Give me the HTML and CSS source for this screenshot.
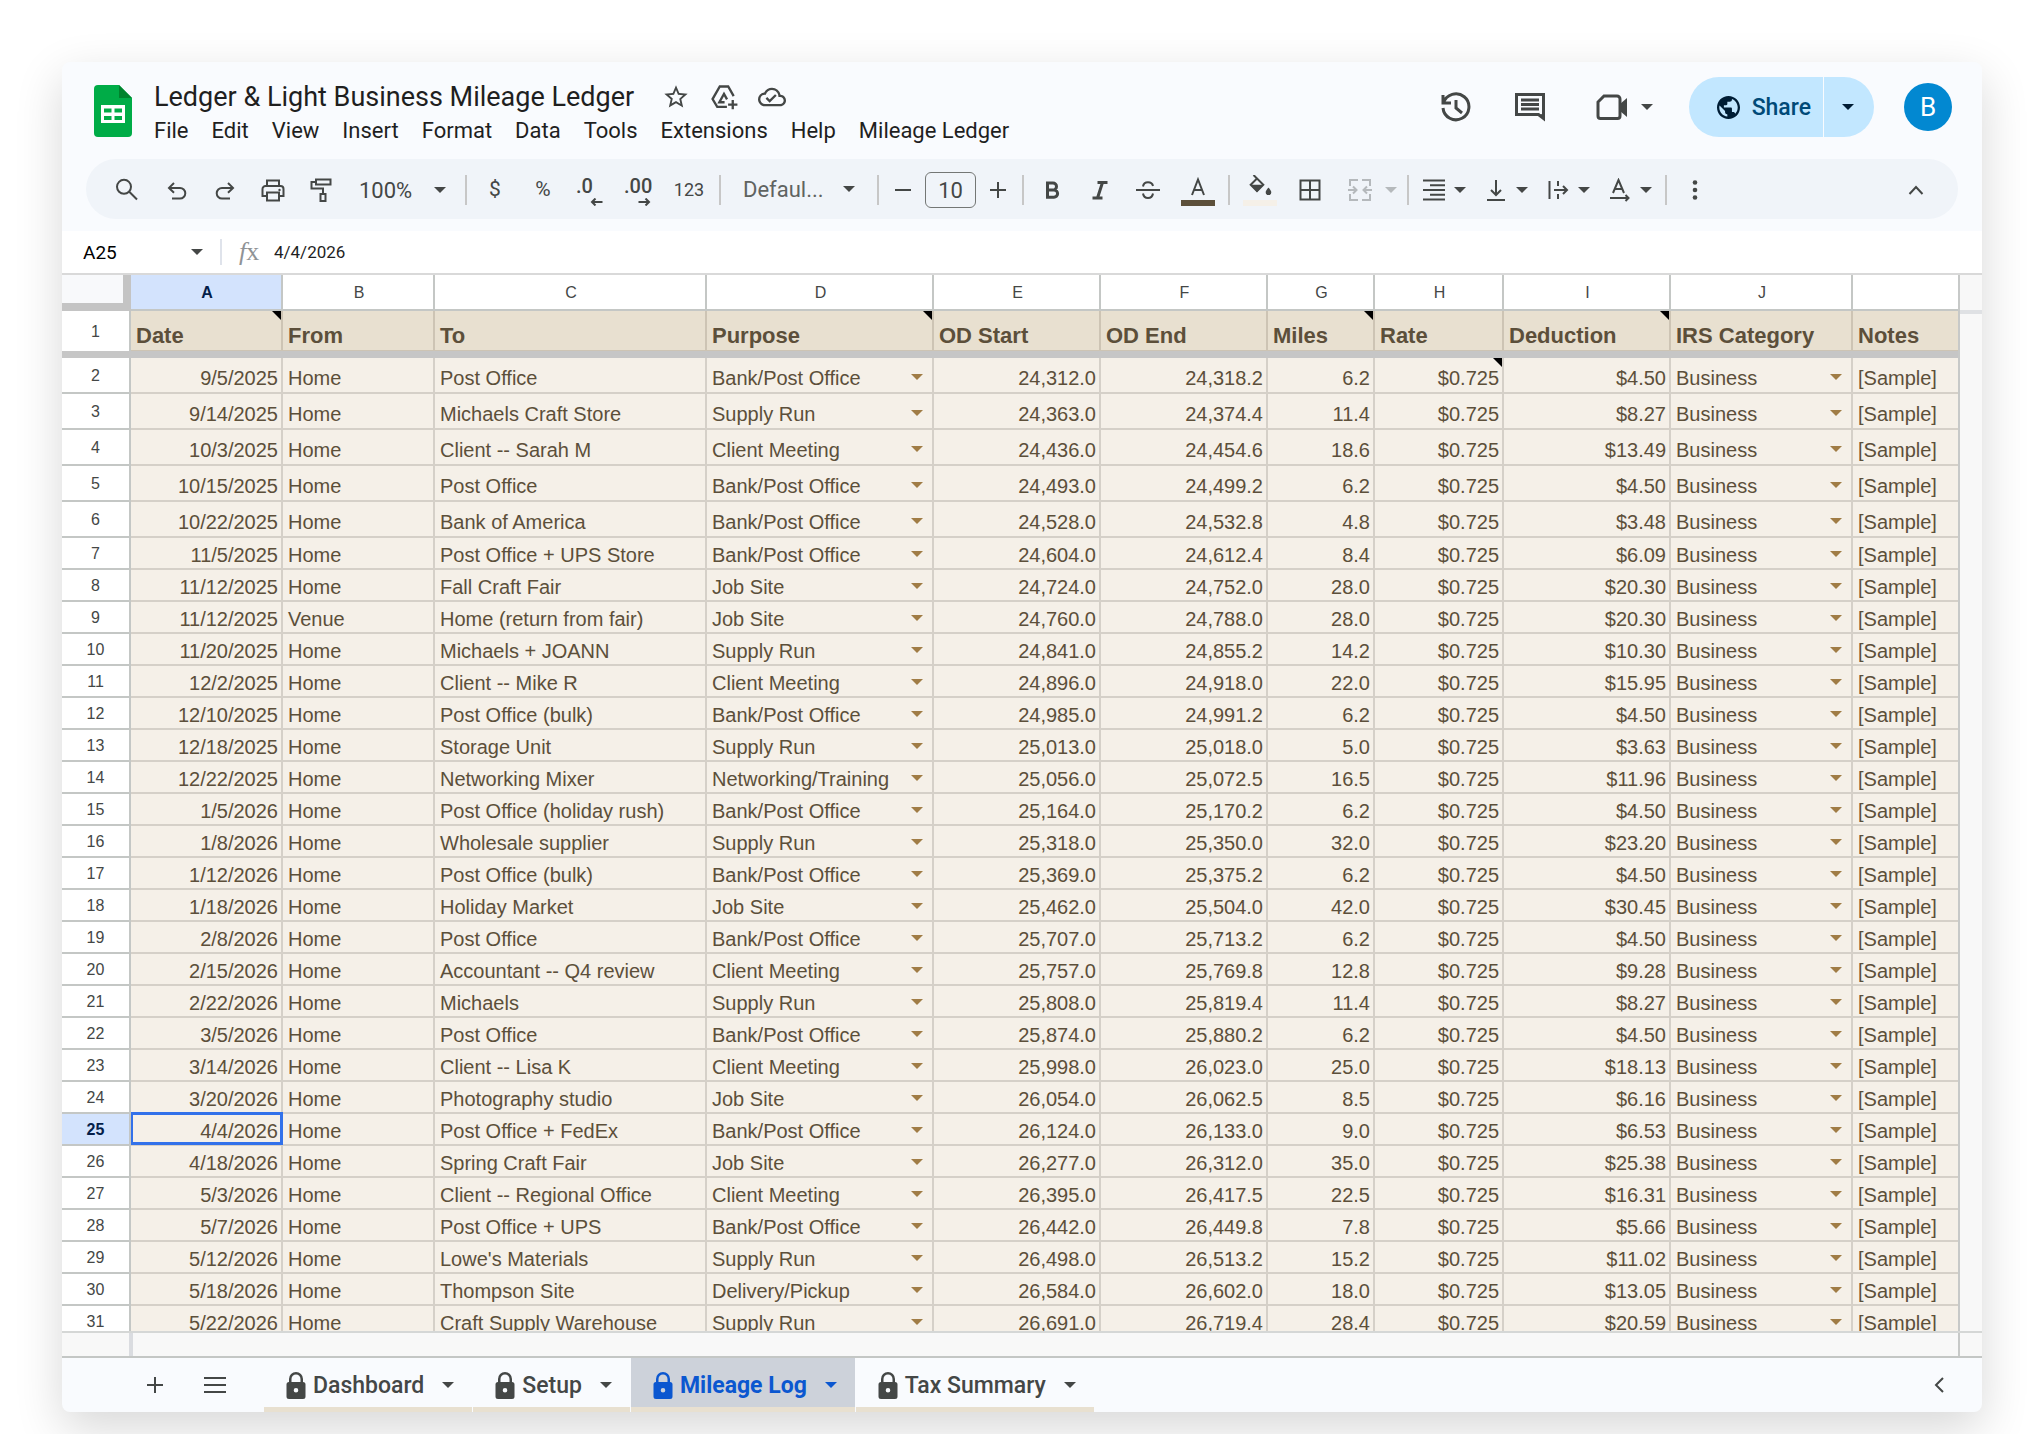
FILE: index.html
```html
<!DOCTYPE html>
<html lang="en">
<head>
  <meta charset="UTF-8" />
  <meta name="viewport" content="width=device-width, initial-scale=1" />
  <title>Ledger &amp; Light Business Mileage Ledger</title>
  <link rel="stylesheet" href="styles.css">
</head>
<body>
  <main class="window">
    <header class="topbar">
      <svg class="logo" viewBox="0 0 38 52" aria-hidden="true">
        <path d="M4 0h21l13 13v35a4 4 0 0 1-4 4H4a4 4 0 0 1-4-4V4a4 4 0 0 1 4-4z" fill="#00ac47"/>
        <path d="M25 0l13 13H25z" fill="#00832d"/>
        <path fill-rule="evenodd" d="M7 20h24v18H7zM10 23.500v4h7.500v-4zM20.500 23.500v4H28v-4zM10 31v4h7.500v-4zM20.500 31v4H28v-4z" fill="#fff"/>
      </svg>
      <div class="doc">
        <div class="title-row">
          <h1>Ledger &amp; Light Business Mileage Ledger</h1>
          <button class="title-btn" aria-label="Star"><svg viewBox="0 0 24 24"><path d="M22 9.24l-7.19-.62L12 2 9.19 8.63 2 9.24l5.46 4.73L5.82 21 12 17.27 18.18 21l-1.63-7.03L22 9.24zM12 15.4l-3.76 2.27 1-4.28-3.32-2.88 4.38-.38L12 6.1l1.71 4.04 4.38.38-3.32 2.88 1 4.28L12 15.4z"/></svg></button>
          <button class="title-btn" aria-label="Move"><svg viewBox="0 0 24 24"><path class="line" d="M14.500 20.500H6.200L2.200 13.800 8.400 3h7.200l4.700 8.200M12.500 16.500H8L12 9.400l2.600 4.600M19.500 14.500v8M15.500 18.500h8"/></svg></button>
          <button class="title-btn" aria-label="Saved to Drive"><svg viewBox="0 0 24 24"><path d="M19.350 10.040A7.490 7.490 0 0 0 12 4C9.110 4 6.600 5.640 5.350 8.040A5.990 5.990 0 0 0 0 14c0 3.310 2.690 6 6 6h13c2.760 0 5-2.240 5-5 0-2.640-2.050-4.780-4.650-4.960zM19 18H6c-2.210 0-4-1.790-4-4s1.790-4 4-4h.71C7.370 7.690 9.480 6 12 6c3.040 0 5.500 2.460 5.500 5.500v.5H19c1.660 0 3 1.340 3 3s-1.340 3-3 3zm-9-3.820l-2.090-2.090L6.500 13.500 10 17l6.010-6.010-1.410-1.410z"/></svg></button>
        </div>
        <nav class="menus">
          <button>File</button>
          <button>Edit</button>
          <button>View</button>
          <button>Insert</button>
          <button>Format</button>
          <button>Data</button>
          <button>Tools</button>
          <button>Extensions</button>
          <button>Help</button>
          <button>Mileage Ledger</button>
        </nav>
      </div>
      <div class="actions">
        <button class="action" aria-label="Version history"><svg viewBox="0 0 32 32"><path class="line thick" d="M3 4v8h8M3.500 12A13 13 0 1 1 3 17M16 9v8l6 5"/></svg></button>
        <button class="action" aria-label="Comments"><svg viewBox="0 0 32 32"><path class="line thick" d="M2.500 3.500h27v24l-5-4h-22z"/><path d="M25 24l6 6v-8z"/><path class="line thick" d="M7 9h18M7 13.500h18M7 18h18"/></svg></button>
        <button class="action meet" aria-label="Meet"><svg viewBox="0 0 32 32"><path class="line thick" d="M8 5h13a3 3 0 0 1 3 3v17a2.500 2.500 0 0 1-2.500 2.500H4.500A2.500 2.500 0 0 1 2 25V11z"/><path d="M24 13l7-6v19l-7-6z"/></svg><svg class="caret" viewBox="0 0 12 6"><path d="M0 0h12L6 6z"/></svg></button>
        <div class="share">
          <button class="share-main"><svg viewBox="2 2 20 20"><path d="M12 2C6.480 2 2 6.480 2 12s4.480 10 10 10 10-4.480 10-10S17.520 2 12 2zm-1 17.930c-3.950-.49-7-3.850-7-7.930 0-.62.08-1.210.21-1.790L9 15v1c0 1.100.9 2 2 2v1.930zm6.900-2.540c-.26-.81-1-1.390-1.900-1.390h-1v-3c0-.55-.45-1-1-1H8v-2h2c.55 0 1-.45 1-1V7h2c1.100 0 2-.9 2-2v-.41c2.930 1.190 5 4.060 5 7.410 0 2.080-.8 3.970-2.100 5.390z"/></svg>Share</button>
          <button class="share-more" aria-label="Share options"><svg class="caret" viewBox="0 0 12 6"><path d="M0 0h12L6 6z"/></svg></button>
        </div>
        <button class="avatar">B</button>
      </div>
    </header>

    <div class="toolbar" role="toolbar">
      <button class="wide" aria-label="Search menus"><svg viewBox="0 0 24 24"><path class="line" d="M14 13.500l8 8M9 1.800a7 7 0 1 1 0 14 7 7 0 0 1 0-14z"/></svg></button>
      <button aria-label="Undo"><svg viewBox="0 0 24 24"><path class="line" d="M7 20.500h8a5.300 5.300 0 0 0 0-10.600H4.500M9 5l-5 4.900 5 4.900"/></svg></button>
      <button aria-label="Redo"><svg viewBox="0 0 24 24"><path class="line" d="M17 20.500H9A5.300 5.300 0 0 1 9 9.900h10.500M15 5l5 4.900-5 4.900"/></svg></button>
      <button aria-label="Print"><svg viewBox="0 0 24 24"><path class="line" d="M6 8V2.500h12V8M6 18H1.500v-7a3 3 0 0 1 3-3h15a3 3 0 0 1 3 3v7H18M6 14.500h12v8H6z"/><circle cx="18.500" cy="12" r="1.200"/></svg></button>
      <button aria-label="Paint format"><svg viewBox="0 0 24 24"><path class="line" d="M7 1.500h14.500v5H7zM7 4H2.500v6.500h11.500V16M11.500 16h5v7h-5z"/></svg></button>
      <button class="zoom">100%<svg class="caret" viewBox="0 0 12 6"><path d="M0 0h12L6 6z"/></svg></button>
      <span class="sep"></span>
      <button class="sym">$</button>
      <button class="sym">%</button>
      <button class="decimal" aria-label="Decrease decimal places">.0<svg class="step" viewBox="0 0 12 8"><path class="line" d="M12 4H2M5 .5L1.500 4 5 7.500"/></svg></button>
      <button class="decimal" aria-label="Increase decimal places">.00<svg class="step" viewBox="0 0 12 8"><path class="line" d="M0 4h10M7 .5L10.500 4 7 7.500"/></svg></button>
      <button class="wide num">123</button>
      <span class="sep"></span>
      <button class="font">Defaul...<svg class="caret" viewBox="0 0 12 6"><path d="M0 0h12L6 6z"/></svg></button>
      <span class="sep"></span>
      <button class="size-btn" aria-label="Decrease font size"><svg viewBox="0 0 24 24"><path class="line" d="M4 12h16"/></svg></button>
      <input class="size" type="text" value="10" aria-label="Font size">
      <button class="size-btn" aria-label="Increase font size"><svg viewBox="0 0 24 24"><path class="line" d="M4 12h16M12 4v16"/></svg></button>
      <span class="sep"></span>
      <button aria-label="Bold"><svg viewBox="0 0 24 24"><path class="line heavy" d="M7.500 5h5.500a3.500 3.500 0 0 1 0 7H7.500zM7.500 12h6.500a3.600 3.600 0 0 1 0 7.200H7.500z"/></svg></button>
      <button aria-label="Italic"><svg viewBox="0 0 24 24"><path class="line heavy" d="M9.500 4.500h10M4.500 20h10M14.500 4.500L9.500 20"/></svg></button>
      <button aria-label="Strikethrough"><svg viewBox="0 0 24 24"><path class="line" d="M0 12h24M7 8.500c.5-3 2.500-4.200 5-4.200s4.500 1.200 5 3.700M7 15.500c.5 3 2.500 4.500 5 4.500s4.500-1.500 5-4.500"/></svg></button>
      <button class="wide color" aria-label="Text color"><svg viewBox="0 0 24 24"><path class="line" d="M6 20L12 4.500 18 20M8 15h8"/></svg><span class="swatch ink"></span></button>
      <span class="sep"></span>
      <button class="wide color" aria-label="Fill color"><svg viewBox="0 0 24 24"><path class="line" d="M5.500 0l9.800 9.700-6.300 6.300-6.300-6.300L9 3.500"/><path d="M2.500 9.700h13L9 17zM20.500 12.500s2.800 3 2.800 4.800a2.800 2.800 0 0 1-5.600 0c0-1.800 2.800-4.800 2.800-4.800z"/></svg><span class="swatch fill"></span></button>
      <button aria-label="Borders"><svg viewBox="0 0 24 24"><path class="line" d="M2.500 2.500h19v19h-19zM12 2.500v19M2.500 12h19"/></svg></button>
      <button class="merge" aria-label="Merge cells" disabled><svg viewBox="0 0 24 24"><path class="line" d="M10 2H2v6M14 2h8v6M10 22H2v-6M14 22h8v-6M0 12h8M5 8.500L8.500 12 5 15.500M24 12h-8M19 8.500L15.500 12l3.500 3.500"/></svg><svg class="caret" viewBox="0 0 12 6"><path d="M0 0h12L6 6z"/></svg></button>
      <span class="sep"></span>
      <button class="menu" aria-label="Horizontal align"><svg viewBox="0 0 24 24"><path class="line" d="M1 2.500h22M8 7.200h15M1 12h22M8 16.800h15M1 21.500h22"/></svg><svg class="caret" viewBox="0 0 12 6"><path d="M0 0h12L6 6z"/></svg></button>
      <button class="menu" aria-label="Vertical align"><svg viewBox="0 0 24 24"><path class="line" d="M3 22h18M12 2v15M7 12l5 5 5-5"/></svg><svg class="caret" viewBox="0 0 12 6"><path d="M0 0h12L6 6z"/></svg></button>
      <button class="menu" aria-label="Text wrapping"><svg viewBox="0 0 24 24"><path class="line" d="M3.500 3v18M12 3v5M12 16v5M8 12h13M17 8l4 4-4 4"/></svg><svg class="caret" viewBox="0 0 12 6"><path d="M0 0h12L6 6z"/></svg></button>
      <button class="menu" aria-label="Text rotation"><svg viewBox="0 0 24 24"><path class="line" d="M5 15L10.500 2 16 15M7 11h7M2 20h18M17.500 17l3 3-3 3"/></svg><svg class="caret" viewBox="0 0 12 6"><path d="M0 0h12L6 6z"/></svg></button>
      <span class="sep"></span>
      <button aria-label="More"><svg viewBox="0 0 24 24"><circle cx="12" cy="4.500" r="2.300"/><circle cx="12" cy="12" r="2.300"/><circle cx="12" cy="19.500" r="2.300"/></svg></button>
      <button class="collapse" aria-label="Hide the menus"><svg viewBox="0 0 24 24"><path class="line" d="M5.500 16l6.500-7 6.500 7"/></svg></button>
    </div>

    <div class="formula-bar">
      <input class="name-box" type="text" value="A25" aria-label="Name box">
      <svg class="caret" viewBox="0 0 12 6"><path d="M0 0h12L6 6z"/></svg>
      <span class="bar-line"></span>
      <span class="fx"><i>f</i>x</span>
      <input class="formula" type="text" value="4/4/2026" aria-label="Formula">
    </div>

    <section class="grid">
      <div class="cells">
        <table>
          <colgroup>
            <col class="c-head"><col class="c-a"><col class="c-b"><col class="c-c"><col class="c-d"><col class="c-e"><col class="c-f"><col class="c-g"><col class="c-h"><col class="c-i"><col class="c-j"><col>
          </colgroup>
          <thead>
            <tr class="letters">
              <td class="corner"></td>
              <th class="active">A</th><th>B</th><th>C</th><th>D</th><th>E</th><th>F</th><th>G</th><th>H</th><th>I</th><th>J</th><th></th>
            </tr>
            <tr class="labels">
              <th class="row-no">1</th>
              <td class="note">Date</td><td>From</td><td>To</td><td class="note">Purpose</td><td>OD Start</td><td>OD End</td><td class="note">Miles</td><td>Rate</td><td class="note">Deduction</td><td>IRS Category</td><td>Notes</td>
            </tr>
            <tr class="freeze"><td colspan="12"></td></tr>
          </thead>
          <tbody id="rows"></tbody>
        </table>
      </div>
      <div class="v-track"><div class="v-top"></div></div>
    </section>
    <div class="h-track"><div class="h-head"></div><div class="h-body"></div></div>

    <footer class="tabs">
      <button class="tab-icon" aria-label="Add sheet"><svg viewBox="0 0 24 24"><path class="line" d="M4 12h16M12 4v16"/></svg></button>
      <button class="tab-icon" aria-label="All sheets"><svg viewBox="0 0 24 24"><path class="line" d="M1 5h22M1 12h22M1 19h22"/></svg></button>
      <div class="sheets" id="sheets"></div>
      <button class="side" aria-label="Show side panel"><svg viewBox="0 0 24 24"><path class="line" d="M15 5l-7 7 7 7"/></svg></button>
    </footer>
  </main>
  <script src="script.js"></script>
</body>
</html>
```
FILE: styles.css
```css
* {
  box-sizing: border-box;
}
body {
  margin: 0;
  height: 100vh;
  padding: 62px 62px 22px;
  background: #fff;
  color: #1f1f1f;
  font-family: Roboto, Arial, sans-serif;
}
button,
input,
select {
  margin: 0;
  padding: 0;
  border: none;
  background: none;
  color: inherit;
  font: inherit;
}
button {
  cursor: pointer;
}
svg {
  display: block;
  flex: none;
  fill: currentColor;
}
.line {
  fill: none;
  stroke: currentColor;
  stroke-width: 2;
}
.thick {
  stroke-width: 3;
}
.heavy {
  stroke-width: 3;
}
.caret {
  width: 12px;
  height: 6px;
}
.window {
  display: flex;
  flex-direction: column;
  height: 100%;
  overflow: hidden;
  border-radius: 8px;
  background: #f9fbfe;
  box-shadow: 0 16px 48px rgba(0, 0, 0, 0.16);
}

/* title and menus */
.topbar {
  display: flex;
  align-items: flex-start;
  height: 97px;
  padding: 15px 30px 0 32px;
}
.logo {
  width: 38px;
  height: 52px;
  margin-top: 8px;
}
.doc {
  padding: 2px 0 0 22px;
}
.title-row {
  display: flex;
  align-items: center;
  height: 36px;
}
h1 {
  margin: 0 18px 0 0;
  font-size: 27px;
  font-weight: 400;
}
.title-btn {
  display: grid;
  place-items: center;
  width: 48px;
  color: #444746;
}
.title-btn svg {
  width: 28px;
  height: 28px;
}
.menus {
  display: flex;
  gap: 23px;
}
.menus button {
  font-size: 22px;
  line-height: 32px;
}
.actions {
  display: flex;
  align-items: center;
  height: 60px;
  margin-left: auto;
  color: #444746;
}
.action {
  display: flex;
  align-items: center;
  justify-content: center;
  width: 74px;
}
.action svg:first-child {
  width: 32px;
  height: 32px;
}
.meet {
  justify-content: flex-start;
  gap: 13px;
  width: 122px;
  padding-left: 29px;
}
.share {
  display: flex;
  align-items: stretch;
  gap: 1px;
  height: 60px;
  margin-right: 30px;
  color: #001d35;
}
.share button {
  display: flex;
  align-items: center;
  background: #c2e7ff;
}
.share-main {
  gap: 12px;
  padding: 0 12px 0 28px;
  border-radius: 30px 0 0 30px;
}
.share .share-main {
  color: #004a77;
  font-size: 23px;
  font-weight: 500;
}
.share-main svg {
  width: 23px;
  height: 23px;
  color: #001d35;
}
.share-more {
  width: 50px;
  padding-left: 18px;
  border-radius: 0 30px 30px 0;
}
.avatar {
  width: 48px;
  height: 48px;
  border-radius: 50%;
  background: #0288d1;
  color: #fff;
  font-size: 26px;
}

/* toolbar */
.toolbar {
  display: flex;
  align-items: center;
  height: 60px;
  margin: 0 24px 12px;
  padding: 2px 18px 0 15px;
  border-radius: 30px;
  background: #f0f4f9;
  color: #444746;
}
.toolbar button {
  display: flex;
  align-items: center;
  justify-content: center;
  flex: none;
  width: 48px;
  height: 40px;
}
.toolbar svg:first-child:not(.caret):not(.step) {
  width: 24px;
  height: 24px;
}
.toolbar .wide {
  width: 52px;
}
.toolbar .zoom {
  justify-content: space-between;
  width: 116px;
  padding: 0 15px 0 14px;
  font-size: 22px;
}
.toolbar .sym {
  padding-bottom: 2px;
  font-size: 21px;
}
.toolbar .decimal {
  position: relative;
  justify-content: flex-start;
  padding: 0 0 8px 9px;
  font-size: 20px;
  font-weight: 500;
}
.step {
  position: absolute;
  right: 12px;
  bottom: 4px;
  width: 13px;
  height: 8px;
}
.toolbar .num {
  padding-bottom: 2px;
  font-size: 18px;
}
.toolbar .font {
  justify-content: space-between;
  width: 148px;
  padding: 0 18px 2px;
  color: #5f6361;
  font-size: 22px;
}
.toolbar .font .caret {
  color: #444746;
}
.toolbar .size-btn {
  width: 40px;
}
.size {
  width: 51px;
  height: 36px;
  margin: 0 2px;
  border: 1px solid #747775;
  border-radius: 6px;
  font-size: 22px;
  text-align: center;
}
.sep {
  flex: none;
  width: 2px;
  height: 30px;
  margin: 0 4px;
  background: #c7c7c7;
}
.toolbar .color {
  flex-direction: column;
  gap: 1px;
}
.swatch {
  width: 34px;
  height: 6px;
}
.ink {
  background: #5c4f3a;
}
.fill {
  background: #f5f0e8;
}
.toolbar .merge {
  gap: 13px;
  width: 69px;
  padding-left: 8px;
  color: #b5b9bc;
}
.toolbar .menu {
  gap: 8px;
  width: 62px;
}
.toolbar .collapse {
  margin-left: auto;
}

/* formula bar */
.formula-bar {
  display: flex;
  align-items: center;
  height: 44px;
  padding: 0 20px 0 21px;
  border-bottom: 2px solid #d9d9d9;
  background: #fff;
  color: #444746;
}
.name-box {
  width: 108px;
  color: #000;
  font-size: 19px;
}
.bar-line {
  width: 2px;
  height: 26px;
  margin: 0 17px;
  background: #dfe3eb;
}
.fx {
  width: 35px;
  color: #8f9396;
  font-family: "Liberation Serif", serif;
  font-size: 26px;
}
.formula {
  flex: 1;
  color: #1f1f1f;
  font-size: 17px;
}

/* sheet */
.grid {
  display: flex;
  flex: 1;
  min-height: 0;
  border-bottom: 2px solid #d5d7d6;
}
.cells {
  flex: 1;
  overflow: hidden;
  border-right: 2px solid #c7c9c8;
}
table {
  width: 100%;
  table-layout: fixed;
  border-spacing: 0;
  font-family: "Liberation Sans", Arial, sans-serif;
  font-size: 20px;
  line-height: 22px;
  color: #5c4f3a;
}
.c-head { width: 69px; }
.c-a, .c-b { width: 152px; }
.c-c { width: 272px; }
.c-d { width: 227px; }
.c-e, .c-f, .c-i { width: 167px; }
.c-g { width: 107px; }
.c-h { width: 129px; }
.c-j { width: 182px; }
th,
td {
  padding: 0;
  border-right: 2px solid #d5d0c8;
  border-bottom: 2px solid #d5d0c8;
  white-space: nowrap;
}
tr > :last-child {
  border-right: none;
}
.letters th {
  height: 36px;
  padding: 2px 0 0 2px;
  border-color: #c4c7c5;
  background: #fff;
  color: #444746;
  font-size: 16px;
  font-weight: 400;
}
.letters .active {
  background: #d3e3fd;
  color: #041e49;
  font-weight: 700;
}
.corner {
  border-right: 8px solid #c4c4c4;
  border-bottom: 8px solid #c4c4c4;
  background: #f8f9fb;
}
.row-no {
  padding-top: 1px;
  border-color: #c4c7c5;
  background: #fff;
  color: #444746;
  font-size: 16px;
  font-weight: 400;
  text-align: center;
  vertical-align: middle;
}
.labels td {
  height: 40px;
  padding: 0 5px 3px;
  border-right-color: #cdc4b4;
  border-bottom: 1px solid #cdc4b4;
  background: #e8e0d0;
  font-size: 22px;
  font-weight: 700;
  vertical-align: bottom;
}
.labels .row-no {
  border-bottom: none;
}
.freeze td {
  height: 7px;
  border: none;
  background: #c6c6c6;
}
tbody td {
  height: 32px;
  padding: 0 5px 2px;
  background: #f5f0e8;
  vertical-align: bottom;
}
tbody .tall td {
  height: 36px;
  padding-bottom: 3px;
}
tbody .right {
  padding-right: 3px;
  text-align: right;
}
.note,
.selected {
  position: relative;
}
.note::after {
  content: "";
  position: absolute;
  top: 0;
  right: 0;
  width: 9px;
  height: 9px;
  background: #000;
  clip-path: polygon(0 0, 100% 0, 100% 100%);
}
td select {
  display: block;
  width: 100%;
  appearance: none;
  background: url("data:image/svg+xml,%3Csvg xmlns='http://www.w3.org/2000/svg' viewBox='0 0 12 6'%3E%3Cpath d='M0 0h12L6 6z' fill='%23a07c45'/%3E%3C/svg%3E") no-repeat right 4px top 7px / 12px 6px;
}
.row-no.active {
  background: #d3e3fd;
  color: #041e49;
  font-weight: 700;
}
/* the selection frame covers the cell's own grid lines */
.selected::after {
  content: "";
  position: absolute;
  inset: -2px -2px -1px 0;
  border: 3px solid #3271ea;
  border-left-width: 2px;
}
.v-track {
  width: 22px;
  background: #f8f8f8;
}
.v-top {
  height: 39px;
  border-bottom: 4px solid #dfe1e4;
}
.h-track {
  display: flex;
  height: 25px;
  border-bottom: 2px solid #c4c7c5;
  background: #f8f8f8;
}
.h-head {
  width: 71px;
  border-right: 4px solid #dadce0;
}
.h-body {
  flex: 1;
  margin-right: 22px;
  border-right: 2px solid #c7c9c8;
}

/* sheet tabs */
.tabs {
  display: flex;
  align-items: center;
  height: 54px;
  padding: 0 18px 0 63px;
  color: #444746;
}
.tab-icon {
  display: grid;
  place-items: center;
  width: 60px;
  height: 54px;
}
.tabs svg {
  width: 24px;
  height: 24px;
}
.sheets {
  display: flex;
  gap: 1px;
  margin-left: 19px;
}
.tab {
  display: flex;
  align-items: center;
  height: 54px;
  padding: 5px 18px 0 22px;
  border-bottom: 5px solid #e8e0d0;
  font-size: 23px;
  font-weight: 500;
}
.tabs .lock {
  width: 20px;
  height: 27px;
  margin-right: 7px;
}
.tabs .tab .caret {
  width: 12px;
  height: 6px;
  margin-left: 18px;
}
.tab.current {
  background: #cdd2da;
  color: #0b57d0;
  font-weight: 700;
}
.side {
  display: grid;
  place-items: center;
  width: 48px;
  height: 54px;
  margin-left: auto;
}
```
FILE: script.js
```js
const trips = [
  ["9/5/2025", "Home", "Post Office", "Bank/Post Office", "24,312.0", "24,318.2", "6.2", "$4.50"],
  ["9/14/2025", "Home", "Michaels Craft Store", "Supply Run", "24,363.0", "24,374.4", "11.4", "$8.27"],
  ["10/3/2025", "Home", "Client -- Sarah M", "Client Meeting", "24,436.0", "24,454.6", "18.6", "$13.49"],
  ["10/15/2025", "Home", "Post Office", "Bank/Post Office", "24,493.0", "24,499.2", "6.2", "$4.50"],
  ["10/22/2025", "Home", "Bank of America", "Bank/Post Office", "24,528.0", "24,532.8", "4.8", "$3.48"],
  ["11/5/2025", "Home", "Post Office + UPS Store", "Bank/Post Office", "24,604.0", "24,612.4", "8.4", "$6.09"],
  ["11/12/2025", "Home", "Fall Craft Fair", "Job Site", "24,724.0", "24,752.0", "28.0", "$20.30"],
  ["11/12/2025", "Venue", "Home (return from fair)", "Job Site", "24,760.0", "24,788.0", "28.0", "$20.30"],
  ["11/20/2025", "Home", "Michaels + JOANN", "Supply Run", "24,841.0", "24,855.2", "14.2", "$10.30"],
  ["12/2/2025", "Home", "Client -- Mike R", "Client Meeting", "24,896.0", "24,918.0", "22.0", "$15.95"],
  ["12/10/2025", "Home", "Post Office (bulk)", "Bank/Post Office", "24,985.0", "24,991.2", "6.2", "$4.50"],
  ["12/18/2025", "Home", "Storage Unit", "Supply Run", "25,013.0", "25,018.0", "5.0", "$3.63"],
  ["12/22/2025", "Home", "Networking Mixer", "Networking/Training", "25,056.0", "25,072.5", "16.5", "$11.96"],
  ["1/5/2026", "Home", "Post Office (holiday rush)", "Bank/Post Office", "25,164.0", "25,170.2", "6.2", "$4.50"],
  ["1/8/2026", "Home", "Wholesale supplier", "Supply Run", "25,318.0", "25,350.0", "32.0", "$23.20"],
  ["1/12/2026", "Home", "Post Office (bulk)", "Bank/Post Office", "25,369.0", "25,375.2", "6.2", "$4.50"],
  ["1/18/2026", "Home", "Holiday Market", "Job Site", "25,462.0", "25,504.0", "42.0", "$30.45"],
  ["2/8/2026", "Home", "Post Office", "Bank/Post Office", "25,707.0", "25,713.2", "6.2", "$4.50"],
  ["2/15/2026", "Home", "Accountant -- Q4 review", "Client Meeting", "25,757.0", "25,769.8", "12.8", "$9.28"],
  ["2/22/2026", "Home", "Michaels", "Supply Run", "25,808.0", "25,819.4", "11.4", "$8.27"],
  ["3/5/2026", "Home", "Post Office", "Bank/Post Office", "25,874.0", "25,880.2", "6.2", "$4.50"],
  ["3/14/2026", "Home", "Client -- Lisa K", "Client Meeting", "25,998.0", "26,023.0", "25.0", "$18.13"],
  ["3/20/2026", "Home", "Photography studio", "Job Site", "26,054.0", "26,062.5", "8.5", "$6.16"],
  ["4/4/2026", "Home", "Post Office + FedEx", "Bank/Post Office", "26,124.0", "26,133.0", "9.0", "$6.53"],
  ["4/18/2026", "Home", "Spring Craft Fair", "Job Site", "26,277.0", "26,312.0", "35.0", "$25.38"],
  ["5/3/2026", "Home", "Client -- Regional Office", "Client Meeting", "26,395.0", "26,417.5", "22.5", "$16.31"],
  ["5/7/2026", "Home", "Post Office + UPS", "Bank/Post Office", "26,442.0", "26,449.8", "7.8", "$5.66"],
  ["5/12/2026", "Home", "Lowe's Materials", "Supply Run", "26,498.0", "26,513.2", "15.2", "$11.02"],
  ["5/18/2026", "Home", "Thompson Site", "Delivery/Pickup", "26,584.0", "26,602.0", "18.0", "$13.05"],
  ["5/22/2026", "Home", "Craft Supply Warehouse", "Supply Run", "26,691.0", "26,719.4", "28.4", "$20.59"]
];

const RATE = "$0.725";
const selectedRow = 25;

function dropdown(value, label) {
  return `<select aria-label="${label}"><option>${value}</option></select>`;
}

document.getElementById("rows").innerHTML = trips.map((t, i) => {
  const row = i + 2;
  const [date, from, to, purpose, start, end, miles, deduction] = t;
  const active = row === selectedRow;
  return `<tr${row < 7 ? ' class="tall"' : ""}>
    <th class="row-no${active ? " active" : ""}">${row}</th>
    <td class="right${active ? " selected" : ""}">${date}</td>
    <td>${from}</td>
    <td>${to}</td>
    <td>${dropdown(purpose, "Purpose, row " + row)}</td>
    <td class="right">${start}</td>
    <td class="right">${end}</td>
    <td class="right">${miles}</td>
    <td class="right${row === 2 ? " note" : ""}">${RATE}</td>
    <td class="right">${deduction}</td>
    <td>${dropdown("Business", "IRS category, row " + row)}</td>
    <td>[Sample]</td>
  </tr>`;
}).join("");

const sheets = ["Dashboard", "Setup", "Mileage Log", "Tax Summary"];
const currentSheet = "Mileage Log";

document.getElementById("sheets").innerHTML = sheets.map((name) => `
  <button class="tab${name === currentSheet ? " current" : ""}">
    <svg class="lock" viewBox="0 0 20 27"><path fill-rule="evenodd" d="M3 10V7a7 7 0 0 1 14 0v3a2.500 2.500 0 0 1 2.500 2.500v12A2.500 2.500 0 0 1 17 27H3a2.500 2.500 0 0 1-2.500-2.500v-12A2.500 2.500 0 0 1 3 10zM5.500 10h9V7a4.500 4.500 0 0 0-9 0zM10 16a2.300 2.300 0 1 0 0 4.600 2.300 2.300 0 0 0 0-4.600z"/></svg>
    ${name}
    <svg class="caret" viewBox="0 0 12 6"><path d="M0 0h12L6 6z"/></svg>
  </button>`).join("");
```
